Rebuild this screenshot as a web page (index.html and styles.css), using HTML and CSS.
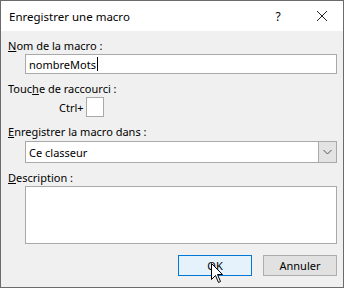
FILE: index.html
```html
<!DOCTYPE html>
<html lang="fr">

<head>
    <meta charset="UTF-8">
    <title>Enregistrer une macro</title>
    <link rel="stylesheet" href="styles.css">
</head>

<body>

    <div class="window">
        <div class="titlebar">
            <span class="title">Enregistrer une macro</span>
            <span class="help">?</span>
            <span class="close">
                <svg width="12" height="12" viewBox="0 0 12 12">
                    <path d="M1 1 L11 11 M11 1 L1 11" stroke="#222" stroke-width="1" fill="none"/>
                </svg>
            </span>
        </div>

        <div class="dialog-body">
            <div class="label"><u>N</u>om de la macro :</div>
            <div class="textbox">nombreMots<span class="caret"></span></div>

            <div class="label">Touc<u>h</u>e de raccourci :</div>
            <div class="shortcut">
                <span>Ctrl+</span>
                <span class="keybox"></span>
            </div>

            <div class="label"><u>E</u>nregistrer la macro dans :</div>
            <div class="combo">
                <span class="combo-text">Ce classeur</span>
                <span class="combo-btn">
                    <svg width="9" height="6" viewBox="0 0 9 6">
                        <path d="M0.5 1 L4.5 5 L8.5 1" stroke="#555" stroke-width="1" fill="none"/>
                    </svg>
                </span>
            </div>

            <div class="label"><u>D</u>escription :</div>
            <div class="memo"></div>

            <div class="buttons">
                <button class="btn btn-default">OK</button>
                <button class="btn">Annuler</button>
            </div>
        </div>

        <!-- mouse pointer over the OK button -->
        <svg class="pointer" width="13" height="21" viewBox="0 0 13 21">
            <path d="M0.5 0.5 L0.5 16.5 L4.5 12.5 L7.5 19.5 L9.5 18.5 L6.5 11.5 L11.5 11.5 Z" fill="#fff" stroke="#000" stroke-width="1"/>
        </svg>
    </div>

</body>

</html>
```

FILE: styles.css
```css
html, body {
    margin: 0;
    padding: 0;
    background: #f0f0f0;
}

.window {
    position: relative;
    width: 344px;
    height: 288px;
    box-sizing: border-box;
    border: 1px solid #6b6b6b;
    background: #f0f0f0;
    font-family: 'Noto Sans', 'Open Sans', sans-serif;
    font-size: 11px;
    color: #000;
    overflow: hidden;
}

.titlebar {
    height: 30px;
    background: #fff;
    display: flex;
    align-items: center;
    padding-left: 8px;
}

.title {
    flex: 1;
    font-size: 11.5px;
}

.help {
    width: 46px;
    text-align: center;
    font-size: 12px;
    margin-left: 4px;
}

.close {
    width: 42px;
    height: 30px;
    display: flex;
    align-items: center;
    justify-content: center;
}

.dialog-body {
    padding: 0 6px 0 7px;
}

.label {
    line-height: 15px;
    height: 15px;
    margin-top: 7px;
    margin-bottom: 1px;
}

.textbox {
    margin-left: 17px;
    height: 20px;
    box-sizing: border-box;
    border: 1px solid #a9a9a9;
    background: #fff;
    padding-left: 3px;
    display: flex;
    align-items: center;
}

.caret {
    display: inline-block;
    width: 1px;
    height: 14px;
    background: #000;
    margin-left: 1px;
}

.shortcut {
    display: flex;
    align-items: center;
    margin-left: 51px;
    gap: 2px;
    height: 20px;
}

.keybox {
    width: 18px;
    height: 20px;
    box-sizing: border-box;
    border: 1px solid #a9a9a9;
    background: #fff;
}

.combo {
    margin-left: 17px;
    margin-top: 2px;
    height: 22px;
    box-sizing: border-box;
    border: 1px solid #a9a9a9;
    background: #fff;
    display: flex;
    align-items: stretch;
}

.combo-text {
    flex: 1;
    padding-left: 3px;
    display: flex;
    align-items: center;
}

.combo-btn {
    width: 17px;
    background: #e3e3e3;
    border-left: 1px solid #a9a9a9;
    display: flex;
    align-items: center;
    justify-content: center;
}

.memo {
    margin-left: 17px;
    margin-top: 1px;
    height: 58px;
    box-sizing: border-box;
    border: 1px solid #a9a9a9;
    background: #fff;
}

.buttons {
    display: flex;
    justify-content: flex-end;
    gap: 11px;
    margin-top: 11px;
}

.btn {
    width: 74px;
    height: 21px;
    box-sizing: border-box;
    border: 1px solid #adadad;
    background: #e1e1e1;
    font-family: inherit;
    font-size: 11px;
    color: #000;
    padding: 0;
}

.btn-default {
    border-color: #0078d7;
    background: #e5f1fb;
}

.pointer {
    position: absolute;
    left: 210px;
    top: 262px;
}
```
